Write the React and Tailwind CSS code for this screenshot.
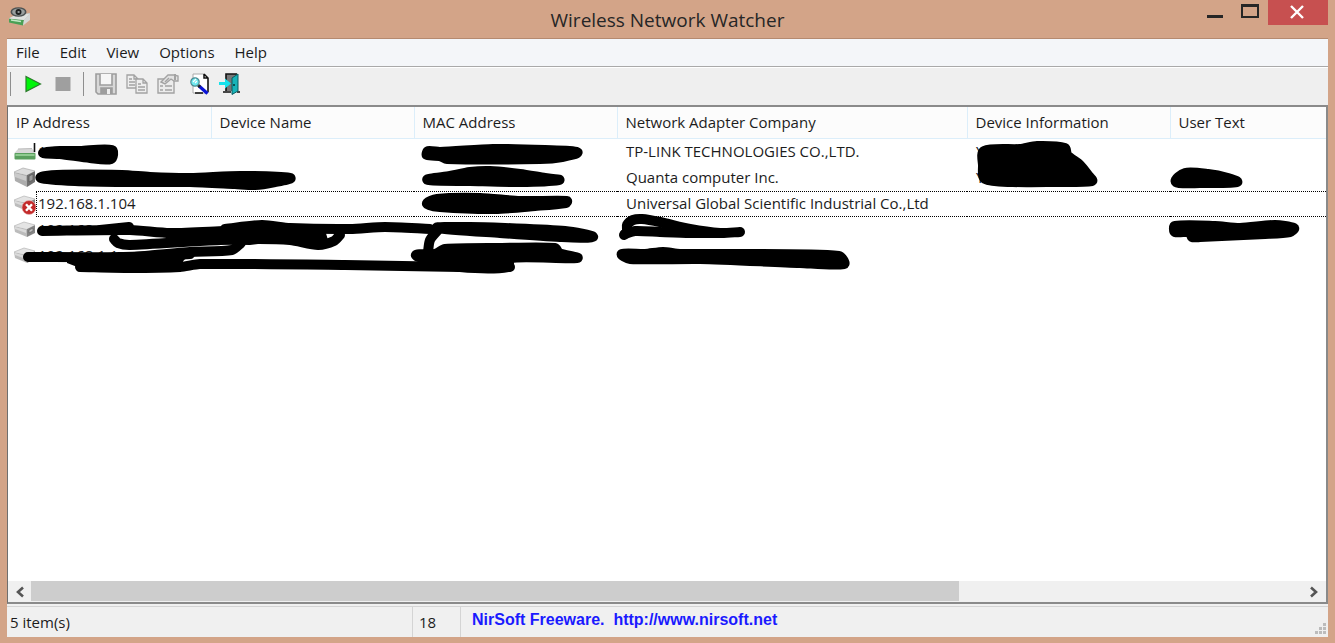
import React from "react";

const MENUS = ["File", "Edit", "View", "Options", "Help"];

const COLUMNS = [
  "IP Address",
  "Device Name",
  "MAC Address",
  "Network Adapter Company",
  "Device Information",
  "User Text",
];

const DEVICES = [
  { icon: "router", ip: "192", company: "TP-LINK TECHNOLOGIES CO.,LTD.", info: "Y" },
  { icon: "computer", ip: "", company: "Quanta computer Inc.", info: "Y" },
  { icon: "offline", ip: "192.168.1.104", company: "Universal Global Scientific Industrial Co.,Ltd", info: "", focused: true },
  { icon: "device", ip: "192.168.1.1", company: "", info: "" },
  { icon: "device", ip: "192.168.1.1", company: "", info: "" },
];

function AppIcon() {
  return (
    <svg width="22" height="20" viewBox="0 0 22 20" aria-hidden="true">
      <path d="M0 11 L7 8 L21 6 L21 12 L14 18 L0 15Z" fill="#b9bcb9" />
      <path d="M0 11.5 L15 13 L14 18.5 L0 15.5Z" fill="#4aa055" />
      <path d="M0 11.5 L15 13 L21 6.5 L6 8Z" fill="#dfe2df" />
      <path d="M2 13 L12 14.5" stroke="#c4e8c6" strokeWidth="1.4" />
      <path d="M15 13 L21 6.5 V13 L14 18.5Z" fill="#d5d7d5" />
      <ellipse cx="9.5" cy="5" rx="8" ry="4.8" fill="#4c5252" />
      <ellipse cx="9.5" cy="5" rx="6.4" ry="3.4" fill="#9aa09f" />
      <circle cx="9.5" cy="5" r="3" fill="#1d2020" />
      <rect x="8.6" y="4" width="2" height="2" fill="#8d9494" />
    </svg>
  );
}

function DeviceIcon({ kind }) {
  if (kind === "router") {
    return (
      <svg width="22" height="22" viewBox="0 0 22 22" aria-hidden="true" className="block">
        <path d="M4 8 L18 7.5 L22 12.5 H0Z" fill="#d8d8d8" />
        <path d="M4 8 L18 7.5" stroke="#bcbcbc" />
        <rect x="0.5" y="12" width="21" height="6.5" rx="1" fill="#5a9f5e" />
        <rect x="1.5" y="13" width="19" height="2" fill="#8fcb90" />
        <path d="M20.5 2 V11" stroke="#111" strokeWidth="1.6" />
      </svg>
    );
  }
  const tall = kind === "computer";
  return (
    <svg width="22" height="22" viewBox="0 0 22 22" aria-hidden="true" className="block">
      {tall ? (
        <g>
          <path d="M0 5 L9 1 L21 4 L13 8Z" fill="#dcdcdc" />
          <path d="M0 5 L13 8 V20 L1 14Z" fill="#adadad" />
          <path d="M1 6 L12 9 V14 L1 10Z" fill="#cacaca" />
          <path d="M13 8 L21 4 V15 L13 20Z" fill="#707070" />
          <path d="M15 9 L19 7 V13 L15 15Z" fill="#9c9c9c" stroke="#555" strokeWidth="0.7" />
          <path d="M0 5 L9 1 L21 4" fill="none" stroke="#aaa" strokeWidth="0.7" />
        </g>
      ) : (
        <g>
          <path d="M0 7 L10 3 L21 6 L13 10Z" fill="#e4e4e4" />
          <path d="M0 7 L13 10 V18 L1 13Z" fill="#bcbcbc" />
          <path d="M1 8 L12 11 V14 L1 10Z" fill="#dadada" />
          <path d="M13 10 L21 6 V14 L13 18Z" fill="#858585" />
          <path d="M15 11 L19 9 V12 L15 14Z" fill="#bdbdbd" stroke="#686868" strokeWidth="0.7" />
          <path d="M0 7 L10 3 L21 6" fill="none" stroke="#b4b4b4" strokeWidth="0.7" />
        </g>
      )}
      {kind === "offline" && (
        <g>
          <circle cx="15" cy="14.5" r="7" fill="#c32a2a" stroke="#e8b0b0" strokeWidth="0.6" />
          <path d="M12 11.2 L18 17.8 M18 11.2 L12 17.8" stroke="#fff" strokeWidth="2.4" />
        </g>
      )}
    </svg>
  );
}

function ToolButton({ label, disabled, className, children }) {
  return (
    <button type="button" aria-label={label} disabled={disabled} className={`flex h-6 items-center justify-center ${className}`}>
      {children}
    </button>
  );
}

function Toolbar() {
  return (
    <div className="flex h-[38px] items-center border-t border-white bg-[#efefef] pb-[6px] pl-[3px]">
      <span className="h-6 w-px bg-[#8e8e8e]" />
      <div className="flex items-center">
        <ToolButton label="Start scanning" className="ml-[10px] w-6">
          <svg width="18" height="18" viewBox="0 0 18 18">
            <path d="M2 1.5 L16.5 9 L2 16.5Z" fill="#00f50a" stroke="#2c7a2c" strokeWidth="1.2" />
          </svg>
        </ToolButton>
        <ToolButton label="Stop scanning" disabled className="ml-[6px] w-6">
          <svg width="16" height="16" viewBox="0 0 16 16">
            <rect x="0.5" y="1" width="15" height="14" fill="#9f9f9f" />
          </svg>
        </ToolButton>
        <span className="ml-2 h-6 w-px bg-[#8e8e8e]" />
        <ToolButton label="Save selected items" disabled className="ml-[10px] w-6">
          <svg width="22" height="22" viewBox="0 0 22 22" fill="none" stroke="#9d9d9d" strokeWidth="1.6">
            <path d="M1 1 H21 V21 H3 L1 19Z" fill="#d8d8d8" />
            <path d="M5 1 V12 H17 V1" fill="#f6f6f6" />
            <path d="M6 21 V15 H17 V21" fill="#9d9d9d" />
            <rect x="12" y="16" width="3" height="5" fill="#eee" stroke="none" />
          </svg>
        </ToolButton>
        <ToolButton label="Copy selected items" disabled className="ml-[7px] w-6">
          <svg width="22" height="20" viewBox="0 0 22 20" fill="none" stroke="#a3a3a3" strokeWidth="1.3">
            <path d="M1 1 H8 L12 5 V14 H1Z M8 1 V5 H12" fill="#eee" />
            <path d="M3 5 H6 M3 8 H9 M3 11 H9" />
            <path d="M10 5 H17 L21 9 V19 H10Z M17 5 V9 H21" fill="#eee" />
            <path d="M12 10 H15 M12 13 H19 M12 16 H19" />
          </svg>
        </ToolButton>
        <ToolButton label="Properties" disabled className="ml-[7px] w-6">
          <svg width="22" height="21" viewBox="0 0 22 21" fill="none" stroke="#a3a3a3" strokeWidth="1.4">
            <path d="M1 6 H17 V20 H1Z" fill="#ececec" />
            <path d="M3 13 H6 M8 13 H15 M3 17 H6 M8 17 H15" />
            <path d="M4 9 L11 2 H17 L21 3 V8 H17 L14 6 L8 11Z" fill="#e2e2e2" />
            <path d="M18 1 V7" strokeWidth="2" />
            <path d="M8 9 L12 5" />
          </svg>
        </ToolButton>
        <ToolButton label="Find" className="ml-2 w-6">
          <svg width="22" height="22" viewBox="0 0 22 22">
            <path d="M4 1 H15 L19 5 V20 H4Z" fill="#fff" stroke="#aaa" />
            <path d="M15 1 L19 5 V19 M6 20 H14 M15 1 V5 H19" fill="none" stroke="#111" strokeWidth="1.5" />
            <path d="M10 13 L18.5 20.5" stroke="#0a14d8" strokeWidth="3.2" />
            <path d="M9 12 L11 14" stroke="#222" strokeWidth="3" />
            <circle cx="6" cy="9" r="4.2" fill="#6fe9f0" stroke="#4b8b93" strokeWidth="1.2" />
            <path d="M4 9 L7 6 M6 10 L8 8" stroke="#fff" strokeWidth="1.2" />
          </svg>
        </ToolButton>
        <ToolButton label="Exit" className="ml-[6px] w-6">
          <svg width="22" height="22" viewBox="0 0 22 22">
            <path d="M7 1 H18 V18 H7Z" fill="#777" />
            <path d="M7 8 V1 H18" fill="none" stroke="#111" strokeWidth="1.6" />
            <path d="M4 19 H12 M18 19 H21 M7 14 V18" stroke="#111" strokeWidth="1.6" />
            <path d="M13 5 L19 1 V18 L13 21.5Z" fill="#17b3b8" stroke="#0a5c60" />
            <path d="M14 12 H16" stroke="#033" strokeWidth="1.4" />
            <path d="M0 9 H6 V5.5 L12 10.5 L6 15.5 V12 H0Z" fill="#16e2ec" />
          </svg>
        </ToolButton>
      </div>
    </div>
  );
}

/* Turns a list of "x,y" points into a softly curved path. */
function curve(list, closed) {
  const p = list.split(" ").map((s) => s.split(",").map(Number));
  const n = p.length;
  const at = (i) => (closed ? p[(i + n) % n] : p[Math.max(0, Math.min(n - 1, i))]);
  let d = `M${p[0][0]} ${p[0][1]}`;
  for (let i = 0; i < (closed ? n : n - 1); i++) {
    const [a, b, c, e] = [at(i - 1), at(i), at(i + 1), at(i + 2)];
    const len = Math.hypot(c[0] - b[0], c[1] - b[1]);
    const ab = Math.min(1, len / (Math.hypot(c[0] - a[0], c[1] - a[1]) || 1)) / 4;
    const be = Math.min(1, len / (Math.hypot(e[0] - b[0], e[1] - b[1]) || 1)) / 4;
    d += ` C${b[0] + (c[0] - a[0]) * ab} ${b[1] + (c[1] - a[1]) * ab} ${c[0] - (e[0] - b[0]) * be} ${c[1] - (e[1] - b[1]) * be} ${c[0]} ${c[1]}`;
  }
  return closed ? d + "Z" : d;
}

const BLOBS = [
  "43,153 60,151 80,151 112,150 111,159 90,158 60,154",
  "41,178 57,175 122,175 150,177 190,178 240,176 290,178 275,182 255,185 235,184 190,182 125,182 75,181",
  "428,151 427,155 440,156 447,159 540,159 562,157 577,152 545,150 493,149 440,152",
  "428,180 450,176 470,172 490,171 520,174 545,178 559,180 520,182 470,181",
  "427,204 437,199 480,198 520,201 567,201 566,203 535,206 495,209 440,207",
  "438,228 470,227 505,228 565,231 593,237 560,237 500,233",
  "416,255 435,254 445,249 500,248 555,248 559,253 577,258 510,258 508,267 460,267 430,260",
  "622,254 645,254 663,252 680,254 740,254 839,256 844,264 800,263 700,259 630,259",
  "984,151 1020,149 1037,146 1065,148 1067,155 1080,165 1088,175 1092,181 1050,182 1013,182 985,179 983,165",
  "1176,182 1185,173 1208,174 1228,178 1237,182 1200,183",
  "1175,226 1215,226 1240,228 1275,225 1294,228 1290,232 1265,234 1200,237 1192,237 1190,232 1175,232",
];

const STROKES = [
  "42,231 130,230 170,233 225,231",
  "100,230 129,227",
  "114,239 118,243 130,245 200,241 250,239 290,240 318,245 334,241 340,235",
  "225,229 262,225 290,228 350,229 385,227 430,229",
  "241,243 232,250 190,252 135,257",
  "28,257 120,257 190,254",
  "80,267 130,268 180,267 200,264 345,265 460,267 510,267",
  "438,230 430,240 428,252",
  "624,235 627,231 627,225 633,220 642,219 660,222 690,229 720,233 740,232",
  "625,234 635,231 660,232 690,233 720,233",
];

/* Black marker strokes drawn over the private cells. */
function Redactions() {
  return (
    <svg
      className="pointer-events-none absolute left-0 top-0"
      width="1318"
      height="180"
      viewBox="8 107 1318 180"
      fill="#000"
      stroke="#000"
      strokeWidth="10"
      strokeLinejoin="round"
      strokeLinecap="round"
      aria-hidden="true"
    >
      {BLOBS.map((b) => (
        <path key={b} d={curve(b, true)} />
      ))}
      {STROKES.map((s) => (
        <path key={s} d={curve(s, false)} fill="none" />
      ))}
      <path stroke="none" d="M175 232 L225 229 L262 224 L290 228 L325 230 L328 240 L318 245 L290 240 L250 245 L190 244Z" />
      <path stroke="none" d="M67 258 L190 256 L184 260 L180 267 L80 268 L67 263Z" />
      <path stroke="none" d="M666 222 L720 233 L700 234 L660 230Z" />
    </svg>
  );
}

function DeviceTable() {
  return (
    <div className="relative flex-1 overflow-hidden bg-white">
      <table className="w-full table-fixed border-collapse text-left text-[15px] leading-5 text-[#1c1c1c]">
        <colgroup>
          <col className="w-[203px]" />
          <col className="w-[203px]" />
          <col className="w-[203px]" />
          <col className="w-[350px]" />
          <col className="w-[203px]" />
          <col />
        </colgroup>
        <thead>
          <tr className="h-[31px] border-b border-[#dceefa] bg-[#fcfcfc]">
            {COLUMNS.map((name) => (
              <th key={name} scope="col" className="truncate border-r border-[#dceefa] p-0 pl-2 font-normal last:border-r-0">
                {name}
              </th>
            ))}
          </tr>
        </thead>
        <tbody>
          {DEVICES.map((d, i) => (
            <tr key={i} className="h-[26px]">
              <td className="p-0">
                <div className="flex items-center pl-[6px]">
                  <DeviceIcon kind={d.icon} />
                  <div
                    className={
                      d.focused
                        ? "flex h-[26px] flex-1 items-center border-y border-l border-dotted border-black pb-[2px] pl-px"
                        : "flex h-[26px] flex-1 items-center pb-[2px] pl-[2px]"
                    }
                  >
                    {d.ip}
                  </div>
                </div>
              </td>
              {["", "", d.company, d.info, ""].map((text, c) => (
                <td key={c} className="p-0">
                  <div
                    className={
                      d.focused
                        ? "flex h-[26px] items-center whitespace-nowrap border-y border-dotted border-black pb-[2px] pl-[9px]"
                        : "flex h-[26px] items-center whitespace-nowrap pb-[2px] pl-[9px]"
                    }
                  >
                    {text}
                  </div>
                </td>
              ))}
            </tr>
          ))}
        </tbody>
      </table>
      <Redactions />
    </div>
  );
}

function HorizontalScrollbar() {
  return (
    <div className="flex h-[21px] bg-[#f0f0f0]">
      <button type="button" aria-label="Scroll left" className="flex w-[23px] items-center justify-center">
        <svg width="10" height="12" viewBox="0 0 10 12">
          <path d="M8 1.5 L3 6 L8 10.5" fill="none" stroke="#555" strokeWidth="2.6" />
        </svg>
      </button>
      <div className="flex-1">
        <div className="h-5 w-[73%] bg-[#cdcdcd]" />
      </div>
      <button type="button" aria-label="Scroll right" className="flex w-6 items-center justify-center">
        <svg width="10" height="12" viewBox="0 0 10 12">
          <path d="M2 1.5 L7 6 L2 10.5" fill="none" stroke="#555" strokeWidth="2.6" />
        </svg>
      </button>
    </div>
  );
}

function StatusBar() {
  return (
    <footer className="flex h-[33px] flex-col bg-[#f0f0f0] pt-[2px] text-[15px] leading-5 text-[#1c1c1c]">
      <div className="flex flex-1 items-stretch border-t border-[#d4d4d4]">
        <div className="flex w-[406px] items-center border-r border-[#d4d4d4] pl-[3px]">5 item(s)</div>
        <div className="flex w-12 items-center border-r border-[#d4d4d4] pl-[6px]">18</div>
        <a
          href="http://www.nirsoft.net"
          className="flex items-center whitespace-pre pb-1 pl-[11px] font-['Liberation_Sans',sans-serif] text-base leading-5 font-bold text-[#1a1aff]"
        >
          {"NirSoft Freeware.  http://www.nirsoft.net"}
        </a>
        <svg className="ml-auto mr-[2px] mt-auto mb-[2px]" width="12" height="12" viewBox="0 0 12 12" fill="#bcbcbc" aria-hidden="true">
          <path d="M9 0h3v3h-3z M5 4h3v3h-3z M9 4h3v3h-3z M1 8h3v3h-3z M5 8h3v3h-3z M9 8h3v3h-3z" />
        </svg>
      </div>
    </footer>
  );
}

export default function App() {
  return (
    <div className="flex min-h-screen flex-col bg-[#d3a488] px-[7px] pb-[6px] font-['Open_Sans','Noto_Sans',sans-serif]">
      <header className="relative flex h-[38px] items-start justify-center">
        <span className="absolute left-[2px] top-[7px]">
          <AppIcon />
        </span>
        <h1 className="pt-[6px] text-[19px] leading-7 text-[#262626]">Wireless Network Watcher</h1>
        <div className="absolute right-0 top-0 flex h-[25px]">
          <button type="button" aria-label="Minimize" className="flex w-[35px] items-end justify-center pb-[7px]">
            <span className="h-[3px] w-4 bg-[#262626]" />
          </button>
          <button type="button" aria-label="Maximize" className="flex w-9 items-start justify-center pt-1">
            <span className="h-[14px] w-[18px] border-2 border-t-[3px] border-[#262626]" />
          </button>
          <button type="button" aria-label="Close" className="flex w-[60px] items-center justify-center bg-[#c75050] pr-[2px] pb-[2px]">
            <svg width="16" height="14" viewBox="0 0 16 14">
              <path d="M2 1 L14 13 M14 1 L2 13" stroke="#fff" strokeWidth="2.4" />
            </svg>
          </button>
        </div>
      </header>

      <nav className="flex h-[29px] items-center gap-[2px] border-t border-b border-t-[#b58a70] border-b-[#a9a9a9] bg-[#f4f6f9] pb-[2px] text-[15px] leading-5 text-[#1c1c1c]">
        {MENUS.map((m) => (
          <button key={m} type="button" className="px-[9px]">
            {m}
          </button>
        ))}
      </nav>
      <Toolbar />

      <main className="flex flex-1 flex-col border-2 border-l border-[#8a8a8a] border-l-[#6f6f6f]">
        <DeviceTable />
        <HorizontalScrollbar />
      </main>
      <StatusBar />
    </div>
  );
}
